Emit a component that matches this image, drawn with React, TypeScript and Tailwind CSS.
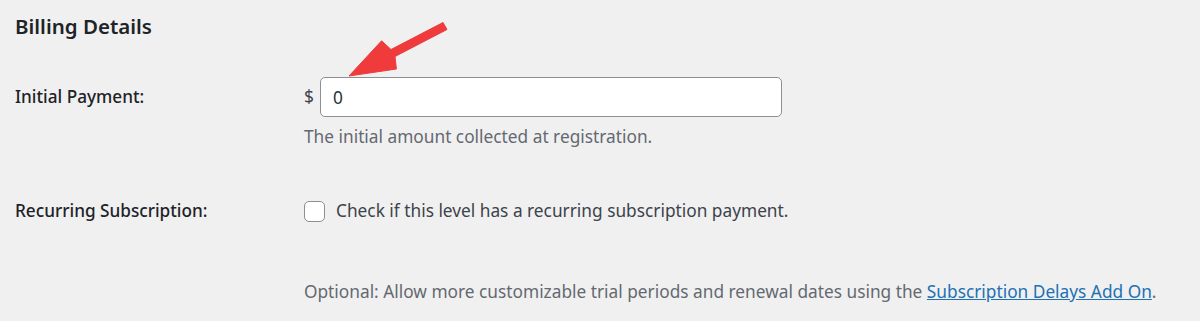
import * as React from "react";

const font = { fontFamily: '"Noto Sans", "Open Sans", sans-serif' };

function Arrow() {
  return (
    <svg
      className="absolute left-[340px] top-[15px] pointer-events-none"
      width="115"
      height="70"
      viewBox="340 15 115 70"
    >
      <polygon
        points="349,76 381.6,40.8 391,49.5 443,22.5 447,29.5 395,56.5 396.4,69"
        fill="#ef3b3b"
        stroke="#ef3b3b"
        strokeWidth="1"
        strokeLinejoin="round"
      />
    </svg>
  );
}

export default function App() {
  return (
    <div
      className="relative w-full h-[321px] bg-[#f0f0f1] pl-[15px] pt-[11px] overflow-hidden"
      style={font}
    >
      <h2 className="text-[20.5px] leading-[30px] font-semibold text-[#1d2327]">
        Billing Details
      </h2>

      <div className="flex mt-[36px]">
        <div className="w-[289px] flex items-center h-[40px]">
          <label className="text-[17.2px] font-medium text-[#1d2327]">
            Initial Payment:
          </label>
        </div>
        <div className="flex flex-col">
          <div className="flex items-center h-[40px]">
            <span className="text-[17.3px] text-[#3c434a] w-[16px]">$</span>
            <input
              type="text"
              defaultValue="0"
              className="w-[462px] h-[40px] px-[12px] bg-white border border-[#8c8f94] rounded-[5px] text-[17.3px] text-[#2c3338] outline-none"
              style={font}
            />
          </div>
          <p className="mt-[7px] text-[17.3px] leading-[26px] text-[#646970]">
            The initial amount collected at registration.
          </p>
        </div>
      </div>

      <div className="flex mt-[48px] h-[26px] items-center">
        <div className="w-[289px]">
          <label className="text-[17.2px] font-medium text-[#1d2327]">
            Recurring Subscription:
          </label>
        </div>
        <label className="flex items-center gap-[11px]">
          <span className="w-[21px] h-[21px] bg-white border border-[#8c8f94] rounded-[5px]" />
          <span className="text-[17.3px] text-[#3c434a]">
            Check if this level has a recurring subscription payment.
          </span>
        </label>
      </div>

      <p className="mt-[55px] ml-[289px] text-[17.3px] leading-[26px] text-[#646970] whitespace-nowrap">
        Optional: Allow more customizable trial periods and renewal dates using the{" "}
        <a href="#" className="text-[#2271b1] underline">
          Subscription Delays Add On
        </a>
        .
      </p>

      <Arrow />
    </div>
  );
}
